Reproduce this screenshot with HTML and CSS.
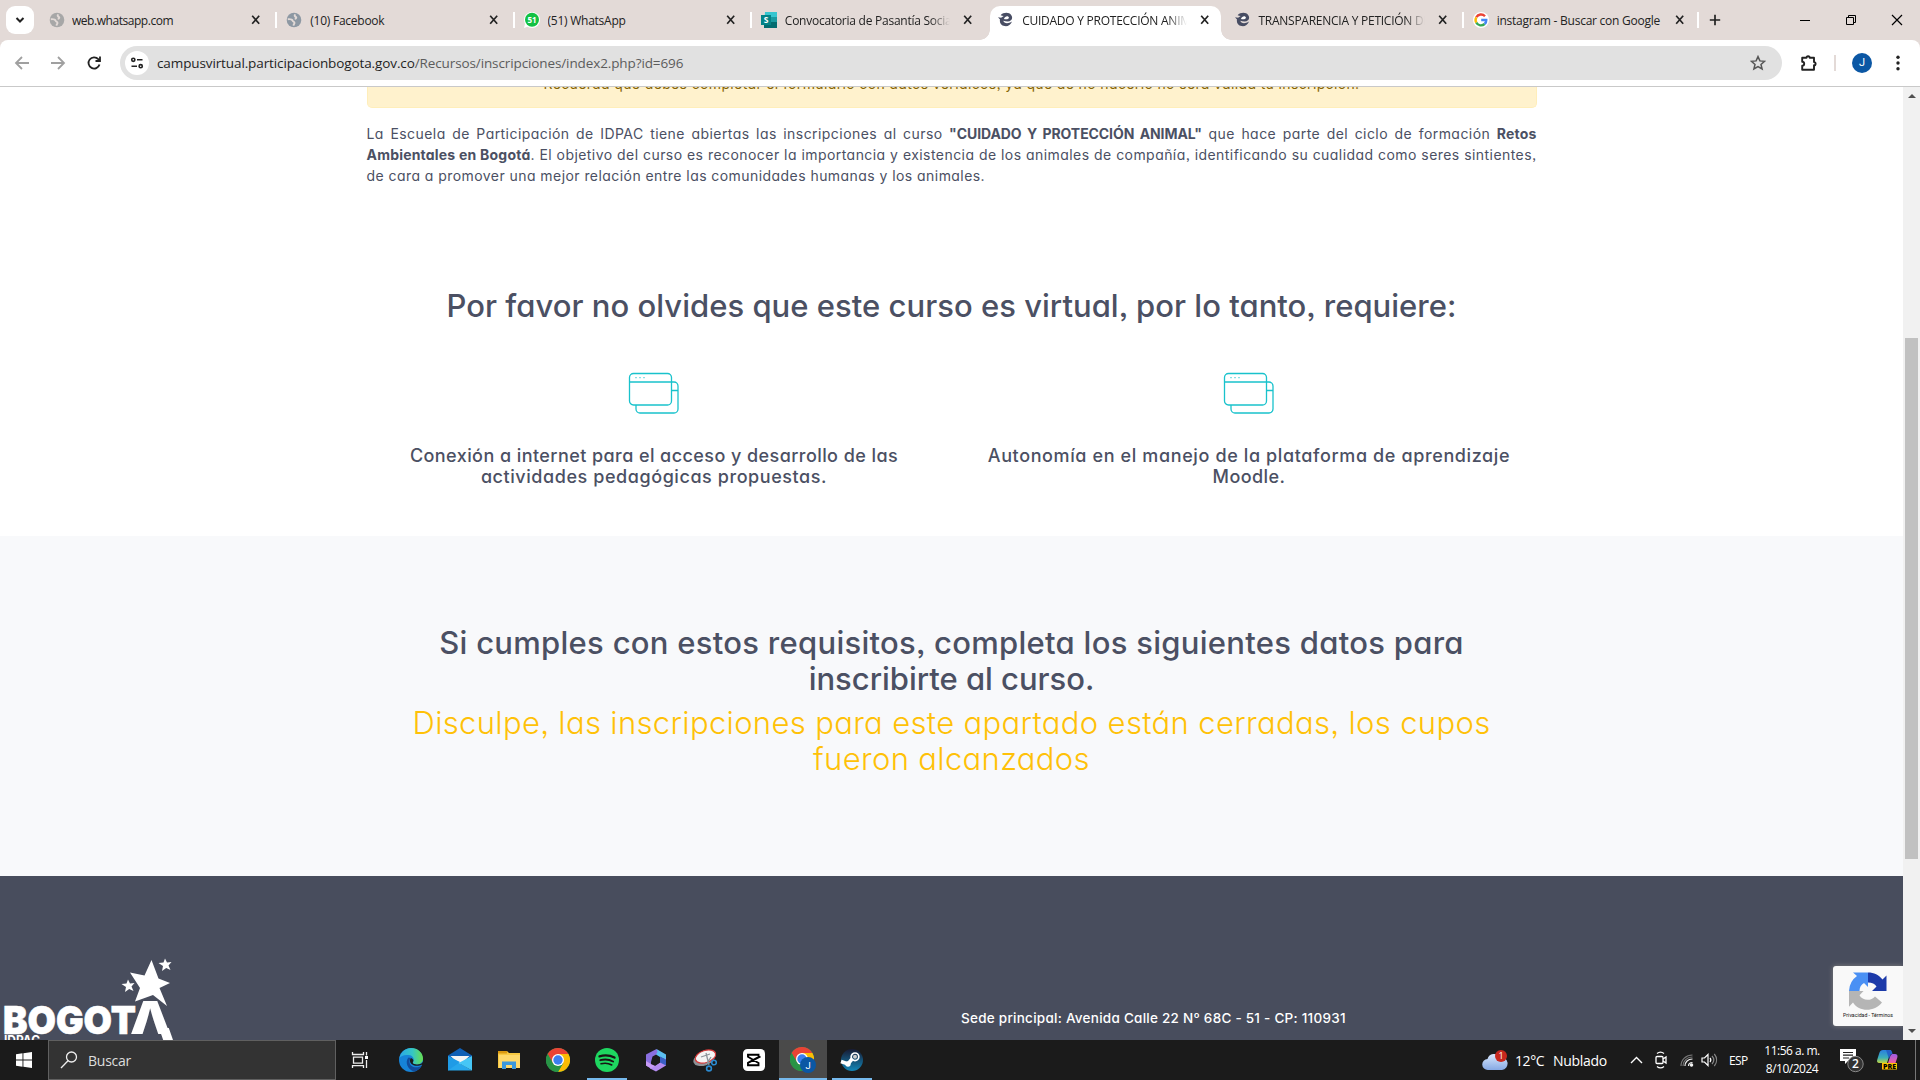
FILE: index.html
```html
<!DOCTYPE html>
<html lang="es">
<head>
<meta charset="utf-8">
<title>CUIDADO Y PROTECCIÓN ANIMAL</title>
<link rel="stylesheet" href="styles.css">
</head>
<body>
<svg class="defs" width="0" height="0">
  <defs>
    <symbol id="close" viewBox="0 0 12 12"><path d="M2.2 1.8l7 8M9.2 1.8l-7 8" stroke="#222" stroke-width="1.7" fill="none"/></symbol>
    <symbol id="globe" viewBox="0 0 16 16"><circle cx="8" cy="8" r="7.3" fill="currentColor"/><path d="M1.800 7.200c2.500-.2 4.500.3 5 1.600.5 1.200 1.800 1 1.700 2.300l-1.200 2.600M9.500 2.500c-1.500.8-.8 1.900.2 2.300 1.200.6.300 1.900-1 2" fill="none" stroke="#e3dad7" stroke-width="1.900"/></symbol>
    <symbol id="escuela" viewBox="0 0 16 16"><path d="M2.600 3.200C5.500.2 11-.2 13.300 3.200c2 3.200.2 6.200-3.600 6.300-1.600 0-3.200-.3-4.400-.8.600 2.700 4.600 3.400 8.700.8-1.300 3.400-4.400 5.200-7.500 4.600C3 13.400 1.300 10.600 2 7.600L0 5.300l3.100.4 2.600-1.600c-1-.2-2-.4-3.100-.9z" fill="#484d63"/><path d="M5.900 7c.9-2.200 2.600-3 4.200-2.500 1.500.7.900 2.600-.9 2.800-1.200.1-2.200 0-3.300-.3z" fill="#fff"/></symbol>
    <symbol id="chrome" viewBox="0 0 24 24"><circle cx="12" cy="12" r="12" fill="#34a853"/><path d="M12 12L1.600 6A12 12 0 0 1 22.400 6z" fill="#ea4335"/><path d="M12 6h10.400A12 12 0 0 1 12 24l5.200-9z" fill="#fbbc04"/><path d="M1.600 6L6.800 15 12 6z" fill="#ea4335"/><path d="M1.600 6A12 12 0 0 0 12 24l5.200-9H6.800z" fill="#289446"/><circle cx="12" cy="12" r="6" fill="#fff"/><circle cx="12" cy="12" r="4.700" fill="#3b7ff0"/></symbol>
    <symbol id="windows" viewBox="0 0 52 52"><g fill="none" stroke="#19c2cc" stroke-width="1.300"><rect x="1.500" y="5.500" width="42" height="31.500" rx="4"/><path d="M1.500 14h42M43.500 14h2.500a4 4 0 0 1 4 4v23a4 4 0 0 1-4 4H12a4 4 0 0 1-4-4v-4M43.500 22.500h6.500"/><path d="M7.500 9.700h1M11.500 9.700h1M15.500 9.700h1"/></g></symbol>
  </defs>
</svg>

<header class="tabstrip">
  <button class="tab-search"><svg width="12" height="12" viewBox="0 0 12 12"><path d="M2.500 4l3.500 3.500L9.500 4" fill="none" stroke="#222" stroke-width="2"/></svg></button>
  <div class="tabs">
    <div class="tab"><svg class="fav grey"><use href="#globe"/></svg><span class="title snug">web.whatsapp.com</span><svg class="x"><use href="#close"/></svg></div>
    <div class="tab sep"><svg class="fav steel"><use href="#globe"/></svg><span class="title">(10) Facebook</span><svg class="x"><use href="#close"/></svg></div>
    <div class="tab sep"><svg class="fav" viewBox="0 0 16 16"><circle cx="8" cy="8" r="8" fill="#fff"/><path d="M0 16l1.500-6 4 4z" fill="#fff"/><circle cx="8" cy="7.800" r="7" fill="#12c143"/><text x="8" y="10.700" text-anchor="middle" font-size="8" font-weight="700" fill="#fff" font-family="Open Sans, sans-serif">51</text></svg><span class="title">(51) WhatsApp</span><svg class="x"><use href="#close"/></svg></div>
    <div class="tab sep"><svg class="fav" viewBox="0 0 16 16"><path d="M4 0h12v16H3z" fill="#37c6d0"/><path d="M3 8h13v8H3z" fill="#036c70"/><path d="M9 5h7v5H9z" fill="#1a9ba1"/><rect y="3" width="10" height="10" fill="#038387"/><text x="5" y="11" text-anchor="middle" font-size="8.500" font-weight="700" fill="#fff" font-family="Open Sans, sans-serif">S</text></svg><span class="title fade">Convocatoria de Pasantía Social</span><svg class="x"><use href="#close"/></svg></div>
    <div class="tab active"><svg class="fav"><use href="#escuela"/></svg><span class="title fade">CUIDADO Y PROTECCIÓN ANIMAL</span><svg class="x"><use href="#close"/></svg></div>
    <div class="tab"><svg class="fav"><use href="#escuela"/></svg><span class="title fade">TRANSPARENCIA Y PETICIÓN DE</span><svg class="x"><use href="#close"/></svg></div>
    <div class="tab sep"><svg class="fav" viewBox="0 0 16 16"><circle cx="8" cy="8" r="8" fill="#fff"/><g fill="none" stroke-width="2.400"><path d="M12 4.200A5.400 5.400 0 0 0 3.300 5.300" stroke="#ea4335"/><path d="M3.300 5.300a5.400 5.400 0 0 0 0 5.400" stroke="#fbbc05"/><path d="M3.300 10.700a5.400 5.400 0 0 0 8.300 1.300" stroke="#34a853"/><path d="M11.600 12c1.200-1.100 1.800-2.500 1.700-4H8.200" stroke="#4285f4"/></g></svg><span class="title">instagram - Buscar con Google</span><svg class="x"><use href="#close"/></svg></div>
  </div>
  <button class="new-tab"><svg width="12" height="12" viewBox="0 0 12 12"><path d="M6 .8v10.400M.8 6h10.400" stroke="#222" stroke-width="1.700"/></svg></button>
  <div class="window-controls">
    <svg width="12" height="12"><path d="M1 6.500h10" stroke="#000"/></svg>
    <svg width="12" height="12" fill="none" stroke="#000"><path d="M1.500 3.500h7v7h-7zM3.500 3.500v-2h7v7h-2"/></svg>
    <svg width="12" height="12"><path d="M1 1l10 10M11 1L1 11" stroke="#000" stroke-width="1.200"/></svg>
  </div>
</header>

<div class="toolbar-wrap">
<nav class="toolbar">
  <svg class="nav-icon off" viewBox="0 0 16 16"><path d="M15 8H2.500M8 2L2 8l6 6"/></svg>
  <svg class="nav-icon off" viewBox="0 0 16 16"><path d="M1 8h12.500M8 2l6 6-6 6"/></svg>
  <svg class="nav-icon" viewBox="0 0 16 16"><path d="M13.500 9.500A5.600 5.600 0 1 1 12.300 4.200L14 6M14 1.500V6H9.500"/></svg>
  <div class="omnibox">
    <span class="site-info"><svg width="14" height="14" viewBox="0 0 14 14" fill="none" stroke="#222" stroke-width="1.600"><circle cx="3.300" cy="3.800" r="1.600"/><path d="M7 3.800h5.500M1.500 10.200H7"/><circle cx="10.700" cy="10.200" r="1.600"/></svg></span>
    <span class="url"><b>campusvirtual.participacionbogota.gov.co</b>/Recursos/inscripciones/index2.php?id=696</span>
    <svg width="16" height="16" viewBox="0 0 16 16"><path d="M8 1.600l1.900 4.300 4.700.4-3.600 3.100 1.100 4.600L8 11.600 3.900 14 5 9.400 1.400 6.300l4.700-.4z" fill="none" stroke="#555" stroke-width="1.500"/></svg>
  </div>
  <svg class="puzzle" viewBox="0 0 18 18"><path d="M2.200 3.800h4.300a1.600 1.600 0 0 1 3.200 0H14v4.300a1.600 1.600 0 0 1 0 3.200v4.500H2.200v-4a2 2 0 0 0 0-4z" fill="none" stroke="#222" stroke-width="1.900" stroke-linejoin="round"/></svg>
  <span class="divider"></span>
  <span class="avatar">J</span>
  <svg class="dots" viewBox="0 0 4 16"><circle cx="2" cy="2.300" r="1.700"/><circle cx="2" cy="8" r="1.700"/><circle cx="2" cy="13.700" r="1.700"/></svg>
</nav>
</div>

<div class="viewport">
  <main class="page">
    <section class="intro">
      <div class="alert">Recuerda que debes completar el formulario con datos verídicos, ya que de no hacerlo no será válida tu inscripción.</div>
      <p class="lead">La Escuela de Participación de IDPAC tiene abiertas las inscripciones al curso <strong class="course">"CUIDADO Y PROTECCIÓN ANIMAL"</strong> que hace parte del ciclo de formación <strong>Retos Ambientales en Bogotá</strong>. El objetivo del curso es reconocer la importancia y existencia de los animales de compañía, identificando su cualidad como seres sintientes, de cara a promover una mejor relación entre las comunidades humanas y los animales.</p>
    </section>
    <section class="needs">
      <h2 class="needs-title">Por favor no olvides que este curso es virtual, por lo tanto, requiere:</h2>
      <div class="cols">
        <div class="col"><svg class="win"><use href="#windows"/></svg><h4>Conexión a internet para el acceso y desarrollo de las<br><span class="l2">actividades pedagógicas propuestas.</span></h4></div>
        <div class="col"><svg class="win"><use href="#windows"/></svg><h4><span class="wide">Autonomía en el manejo de la plataforma de aprendizaje</span><br>Moodle.</h4></div>
      </div>
    </section>
    <section class="closed">
      <h2>Si cumples con estos requisitos, completa los siguientes datos para<br><span class="tight">inscribirte al curso.</span></h2>
      <h2 class="warn">Disculpe, las inscripciones para este apartado están cerradas, los cupos<br>fueron alcanzados</h2>
    </section>
    <footer class="foot">
      <svg class="brand" width="180" height="84" viewBox="0 0 180 84" fill="#fff" font-family="Inter, sans-serif">
        <path d="M151.500 4l7 18.500L170 27l-10.500 5 7.500 18-14-11-18 6.500 5-13.500-10-15.500 14.500 3z"/>
        <path d="M165 2.500l2 4 4.500-.5-3 3.500 2 4.500-4.300-2-4.200 3 1-5-4.500-3 5-.5zM128 23.500l2 4 4.500-.5-3 3.500 2 4.500-4.300-2-4.200 3 1-5-4.500-3 5-.5z"/>
        <text x="3" y="78" font-size="38.500" font-weight="900" textLength="133" lengthAdjust="spacingAndGlyphs" stroke="#fff" stroke-width=".6">BOGOT</text>
        <text x="130" y="78" font-size="46" font-weight="900" textLength="41" lengthAdjust="spacingAndGlyphs">Λ</text>
        <path d="M159 72h9.800l4.200 12h-9.800z"/>
        <text x="4" y="89" font-size="13" font-weight="700" textLength="36" lengthAdjust="spacingAndGlyphs">IDPAC</text>
      </svg>
      <p class="contact">Sede principal: Avenida Calle 22 Nº 68C - 51 - CP: 110931</p>
    </footer>
    <aside class="recaptcha">
      <svg width="38" height="38" viewBox="0 0 38 38"><path d="M0 19A19 19 0 0 1 8 4L4 .5h15V15l-4-4c-3 1.500-4.500 4.500-4.500 8z" fill="#4a90f4"/><path d="M19 .5c6 0 11 2.500 14.500 7l4-4V19H23l4.500-4.500C26 12 23 10.500 19 10.500z" fill="#1c3aa9"/><path d="M0 19h14.500l-4 4.300c2.500 5 11 6.500 15.500 1.200l7 6C25 40.500 10 40 4 30.500l-4 4.200z" fill="#b5b5b5"/></svg>
      <span>Privacidad - Términos</span>
    </aside>
  </main>
  <div class="scrollbar"><i class="up"></i><i class="thumb"></i><i class="down"></i></div>
</div>

<footer class="taskbar">
  <span class="start"><svg width="16" height="16" viewBox="0 0 16 16" fill="#fff"><path d="M0 2.200l6.500-.9v6.200H0zM7.400 1.200L16 0v7.500H7.400zM0 8.400h6.500v6.300L0 13.800zM7.400 8.400H16V16l-8.600-1.200z"/></svg></span>
  <div class="search"><svg width="18" height="18" viewBox="0 0 18 18" fill="none" stroke="#eee" stroke-width="1.300"><circle cx="11.500" cy="6" r="5"/><path d="M8 9.700L1 17"/></svg><span>Buscar</span></div>
  <div class="apps">
    <span class="app view"><svg width="18" height="18" viewBox="0 0 18 18" fill="none" stroke="#eee" stroke-width="1.300"><path d="M2.500 6.200h9v6h-9zM1.500 1v2.500h11V1M1.500 17v-2.300h11V17M15.500 1v3.500M15.500 9v8"/><path d="M14 5h3v3h-3z" fill="#fff" stroke="none"/></svg></span>
    <span class="app"><svg width="24" height="24" viewBox="0 0 24 24"><defs><linearGradient id="eg" x1="0" x2="1"><stop offset="0" stop-color="#2aa7e8"/><stop offset=".55" stop-color="#35c6c5"/><stop offset="1" stop-color="#68e04e"/></linearGradient></defs><circle cx="12" cy="12" r="12" fill="#1683d8"/><path d="M.3 10C2 3.500 7 0 12 0c7 0 12 5 12 10.500 0 4-3.500 6-6.500 6-3 0-4.500-1.200-3.500-2.500 1.500-2 1-6.500-4.500-7C5 6.500 1.500 8 .3 10z" fill="url(#eg)"/><path d="M9.500 9.500c-4 4-1 12.500 6 14 3.500-1 6-3.500 7-5.500-6 3-11.500.5-12-3.500-.2-2 .3-3.500 1.500-4.500z" fill="#114c9c"/><path d="M12 10c-1.500 1.500-1.500 4 .5 6 3 2.500 7.500 2 10 .8.800-.3 1.200.2.500 1.200l1 .5V14c-2 2.500-5 2.800-7.500 2.300-2-.3-3.400-1-2.500-2.300.8-1 .8-3-2-4z" fill="#1b1b1b"/></svg></span>
    <span class="app"><svg width="24" height="24" viewBox="0 0 24 24"><path d="M0 7.500L12 0l12 7.500V12H0z" fill="#0f5fb5"/><path d="M2.500 8h19L12 17z" fill="#f4f4f4"/><path d="M0 8l12 7.500L24 22.500H0z" fill="#27a7ec"/><path d="M24 8L10.500 15 24 22.500z" fill="#46c6f6"/><path d="M0 8l12 6-12 8.500z" fill="#1f9be6"/></svg></span>
    <span class="app"><svg width="24" height="24" viewBox="0 0 24 24"><path d="M1 3h9l2 2h11v15H1z" fill="#f8c942"/><path d="M1 3h9v2.500H1z" fill="#dc9a10"/><path d="M2 7h21v13H2z" fill="#ffd96b"/><path d="M5 21v-7.500h14V21h-4v-4H9v4z" fill="#3b98dd"/></svg></span>
    <span class="app"><svg width="24" height="24"><use href="#chrome"/></svg></span>
    <span class="app open"><svg width="24" height="24" viewBox="0 0 24 24"><circle cx="12" cy="12" r="12" fill="#1ed760"/><g fill="none" stroke="#191414" stroke-linecap="round"><path d="M4.500 8.300c5-1.500 10.500-1.100 15 1.300" stroke-width="2.300"/><path d="M5.300 12.200c4.300-1.300 9-.8 12.800 1.300" stroke-width="1.900"/><path d="M6 15.800c3.700-1 7.500-.7 10.800 1.200" stroke-width="1.500"/></g></svg></span>
    <span class="app"><svg width="24" height="24" viewBox="0 0 24 24"><path d="M12.500 1L2 6.500v11l5 3V14l1.500-5.500L15 5z" fill="#8a6fe0"/><path d="M12.500 1L22 6.500V12l-6-3-4-2.500 1.500-2.500z" fill="#5cc0f2"/><path d="M22 10v7.500L12 23.500 6 20.500v-4l5 1.500 5-3.500z" fill="#b58cf0"/><path d="M2 13l5 3 4 2-4 2.500-5-3z" fill="#c79bf5"/><path d="M16 8.500l6 3v6l-6-3z" fill="#3a5fc4"/><path d="M11 9l5 2.200v3.300L11.500 17 8.500 15v-4z" fill="#1b1b1b"/></svg></span>
    <span class="app"><svg width="24" height="24" viewBox="0 0 24 24"><ellipse cx="11" cy="11" rx="11" ry="6.500" fill="#8d9297" transform="rotate(-18 11 11)"/><ellipse cx="12.500" cy="8.500" rx="10.500" ry="6" fill="#f4f4f4" stroke="#d63b3b" stroke-width="1.200" transform="rotate(-18 12.500 8.500)"/><path d="M8 9l9-3M13 5l3 12M18 9l-5 8" stroke="#8c949b" stroke-width="1.300"/><g fill="none" stroke="#2b8ad0" stroke-width="1.600"><circle cx="21" cy="14.500" r="2.300"/><circle cx="16" cy="20.500" r="2.400"/></g></svg></span>
    <span class="app"><svg width="22" height="22" viewBox="0 0 22 22"><rect width="22" height="22" rx="4.500" fill="#fff"/><path d="M17.500 7.500L5 14v2.300h10.500V14L4.500 7.500M5 8V5.700h10.500V8L4.500 14" fill="none" stroke="#000" stroke-width="1.900"/></svg></span>
    <span class="app current"><svg width="26" height="26" viewBox="0 0 26 26"><svg width="24" height="24"><use href="#chrome"/></svg><circle cx="18" cy="18" r="8" fill="#0b57a4"/><text x="18" y="21.500" text-anchor="middle" font-size="9.500" fill="#fff" font-family="Roboto, sans-serif">J</text></svg></span>
    <span class="app open"><svg width="24" height="24" viewBox="0 0 24 24"><defs><linearGradient id="sg" x1="0" x2="0" y1="0" y2="1"><stop offset="0" stop-color="#171a33"/><stop offset="1" stop-color="#1387b8"/></linearGradient></defs><circle cx="12" cy="12" r="11" fill="url(#sg)"/><path d="M1 13.500l7 2.500 4.500-5.500" fill="none" stroke="#fff" stroke-width="3.600"/><circle cx="15" cy="8.800" r="3.800" fill="none" stroke="#fff" stroke-width="1.700"/><circle cx="15" cy="8.800" r="2" fill="#ccc"/><circle cx="8" cy="16" r="2.700" fill="#fff"/></svg></span>
  </div>
  <div class="tray">
    <svg class="cloud" width="26" height="22" viewBox="0 0 26 22"><defs><linearGradient id="cg" x1="0" x2="0" y1="0" y2="1"><stop offset="0" stop-color="#d9e8fd"/><stop offset="1" stop-color="#86a9e4"/></linearGradient></defs><path d="M6 21a5.500 5.500 0 0 1-.5-11A7 7 0 0 1 18 8a6 6 0 0 1 2 13z" fill="url(#cg)"/><circle cx="19" cy="7" r="6" fill="#c8281e"/><text x="19" y="10.300" text-anchor="middle" font-size="9" fill="#fff" font-family="Open Sans, sans-serif">1</text></svg>
    <span class="temp">12°C</span><span class="sky">Nublado</span>
    <svg class="caret" width="13" height="8" viewBox="0 0 13 8"><path d="M1 7l5.500-5.500L12 7" fill="none" stroke="#fff" stroke-width="1.400"/></svg>
    <svg class="meet" width="14" height="18" viewBox="0 0 14 18" fill="none" stroke="#fff" stroke-width="1.300"><rect x="2" y="5.500" width="7" height="7" rx="1"/><path d="M9 8l3-2v6L9 10M3 2.500c2-1.600 5-1.600 7 0M3 15.500c2 1.600 5 1.600 7 0"/></svg>
    <svg class="wifi" width="14" height="14" viewBox="0 0 14 14" fill="none" stroke="#eee" stroke-width="1.200"><path d="M8.500 13c0-2 1.500-3.500 4-3.500M5 13c0-4 3-7 7.500-7"/><path d="M1 13C1 6.500 6 2 12.500 2M3 13c0-5 4-9 9.500-9" stroke="#777"/><circle cx="11.500" cy="12" r="1.200" fill="#fff"/></svg>
    <svg class="sound" width="17" height="14" viewBox="0 0 17 14" fill="none" stroke="#fff" stroke-width="1.200"><path d="M1 5h2.500L7 1.500v11L3.500 9H1zM9 5c1 1.200 1 2.800 0 4"/><path d="M11 3c2.200 2.400 2.200 5.600 0 8M13.300 1c3 3.600 3 8.400 0 12" stroke="#888"/></svg>
    <span class="lang">ESP</span>
    <span class="clock"><span>11:56 a. m.</span><span>8/10/2024</span></span>
    <svg class="notif" width="26" height="26" viewBox="0 0 26 26"><path d="M1 2h16v12H9l-3 3v-3H1z" fill="#fff"/><path d="M4 5.500h10M4 8.200h10M4 11h6" stroke="#222" stroke-width="1.200"/><circle cx="16.500" cy="17" r="7.700" fill="#333" stroke="#888"/><text x="16.500" y="21.300" text-anchor="middle" font-size="12" font-weight="600" fill="#fff" font-family="Open Sans, sans-serif">2</text></svg>
    <svg class="copilot" width="22" height="20" viewBox="0 0 22 20"><defs><linearGradient id="ca" x1="0" x2="0" y1="0" y2="1"><stop offset="0" stop-color="#2a7fe0"/><stop offset=".6" stop-color="#3cb0b8"/><stop offset="1" stop-color="#c3d53c"/></linearGradient><linearGradient id="cb" x1="0" x2="0" y1="0" y2="1"><stop offset="0" stop-color="#9c5be8"/><stop offset="1" stop-color="#f0609c"/></linearGradient></defs><path d="M6 0h8l-4 13H2c-2 0-2.300-1.500-1.700-3.500l2-6.500C3 1 4 0 6 0z" fill="url(#ca)"/><path d="M15 4h3c2 0 3 1.500 2.300 3.500L18.500 13H11l2.500-7.500z" fill="url(#cb)"/><path d="M9 0h4c1.500 0 2 1.500 2.500 4-1.500 0-2 .5-2.500 2L12 9z" fill="#2363c8"/><rect x="5" y="13" width="15" height="6.500" fill="#ffc400"/><text x="12.500" y="18.700" text-anchor="middle" font-size="7" font-weight="800" fill="#000" font-family="Open Sans, sans-serif">PRE</text></svg>
    <i class="peek"></i>
  </div>
</footer>
</body>
</html>
```
FILE: styles.css
```css
* { box-sizing: border-box; }
body {
  margin: 0;
  width: 1920px;
  height: 1080px;
  overflow: hidden;
  display: flex;
  flex-direction: column;
  font-family: "Open Sans", "Noto Sans", sans-serif;
  background: #fff;
}
.defs { position: absolute; }
button { border: 0; padding: 0; background: none; }
svg { flex: none; display: block; }

/* Tab strip */
.tabstrip {
  flex: none;
  height: 40px;
  display: flex;
  align-items: stretch;
  background: #e3dad7;
}
.tab-search {
  flex: none;
  width: 28px;
  height: 28px;
  margin: 6px 0 0 6px;
  border-radius: 9px;
  background: #fff;
  display: flex;
  align-items: center;
  justify-content: center;
}
.tabs {
  flex: none;
  width: 1661px;
  margin-left: 4px;
  display: grid;
  grid-template-columns: repeat(7, minmax(0, 1fr));
}
.tab {
  display: flex;
  align-items: center;
  padding: 0 13px 0 11px;
  position: relative;
}
.tab.sep { background: linear-gradient(#fff, #fff) 0 12px / 2px 16px no-repeat; }
.tab:last-child { background: linear-gradient(#fff, #fff) 0 12px / 2px 16px no-repeat, linear-gradient(#fff, #fff) 100% 12px / 2px 16px no-repeat; }
.tab.active {
  background: #fff;
  margin: 6px 3px 0;
  padding: 0 10px 6px 8px;
  border-radius: 10px 10px 0 0;
}
.tab.active::before, .tab.active::after {
  content: "";
  position: absolute;
  bottom: 0;
  width: 10px;
  height: 10px;
}
.tab.active::before { left: -10px; background: radial-gradient(circle at 0 0, transparent 9.5px, #fff 10px); }
.tab.active::after { right: -10px; background: radial-gradient(circle at 100% 0, transparent 9.5px, #fff 10px); }
.fav { width: 16px; height: 16px; }
.grey { color: #a7a7a7; }
.steel { color: #8d98a3; }
.title {
  flex: 1;
  min-width: 0;
  margin: 1px 13px 0 7px;
  font-size: 12px;
  letter-spacing: -0.25px;
  color: #222;
  white-space: nowrap;
  overflow: hidden;
}
.sep .title, .active .title { margin-left: 8px; }
.snug { letter-spacing: -0.46px; }
.fade { margin-right: 12px; mask-image: linear-gradient(90deg, #000 88%, transparent 100%); }
.x { width: 12px; height: 12px; }
.new-tab { width: 32px; display: flex; align-items: center; justify-content: center; }
.window-controls {
  margin-left: auto;
  padding-right: 17px;
  display: flex;
  align-items: center;
  gap: 34px;
}

/* Address bar */
.toolbar-wrap { flex: none; background: #e3dad7; border-bottom: 1px solid #c9c9c9; }
.toolbar {
  height: 46px;
  padding: 0 20px 0 14px;
  display: flex;
  align-items: center;
  background: #fff;
  border-radius: 8px 8px 0 0;
}
.nav-icon { width: 16px; height: 16px; margin-right: 20px; fill: none; stroke: #222; stroke-width: 1.8; }
.nav-icon.off { stroke: #a0a0a0; }
.nav-icon:nth-child(3) { margin-right: 18px; }
.omnibox {
  width: 1662px;
  height: 34px;
  border-radius: 17px;
  background: #e1e1e1;
  padding: 0 16px 0 5px;
  display: flex;
  align-items: center;
}
.site-info {
  width: 24px;
  height: 24px;
  border-radius: 50%;
  background: #fff;
  display: flex;
  align-items: center;
  justify-content: center;
}
.url { flex: 1; margin-left: 8px; font-size: 13.5px; letter-spacing: -0.11px; color: #5c5c5c; }
.url b { font-weight: 400; color: #1f1f1f; }
.puzzle { width: 18px; height: 18px; margin-left: 18px; }
.divider { width: 2px; height: 16px; margin-left: 16px; background: #e3dad7; }
.avatar {
  width: 20px;
  height: 20px;
  margin-left: 16px;
  border-radius: 50%;
  background: #0b57a4;
  color: #fff;
  font: 11px/20px Roboto, sans-serif;
  text-align: center;
}
.dots { width: 4px; height: 16px; margin-left: 24px; fill: #222; }

/* Page */
.viewport { flex: none; height: 953px; display: flex; overflow: hidden; }
.page {
  position: relative;
  width: 1903px;
  overflow: hidden;
  color: #4b5063;
  font-family: Inter, sans-serif;
  font-feature-settings: "cv11", "ss03";
}
.intro { width: 1170px; margin: 0 auto; }
.alert {
  height: 21px;
  border: 1px solid #ffeeba;
  border-top: 0;
  border-radius: 0 0 5px 5px;
  background: #fff2cd;
  color: #856404;
  text-align: center;
  font-size: 14px;
  line-height: 21px;
  letter-spacing: 0.365px;
  overflow: hidden;
}
.alert::before { content: ""; display: block; margin-top: -14px; }
.lead {
  margin: 15px 0 0;
  font-size: 14px;
  line-height: 21px;
  letter-spacing: 0.44px;
  text-align: justify;
}
.lead strong { letter-spacing: 0.2px; }
.lead .course { letter-spacing: -0.08px; }
.needs { height: 350px; padding-top: 102px; text-align: center; }
h2 {
  margin: 0;
  font-size: 31px;
  line-height: 36px;
  font-weight: 500;
  letter-spacing: 0.285px;
  text-align: center;
}
.needs-title { letter-spacing: 0.025px; }
.tight { letter-spacing: -0.02px; }
.cols { width: 1190px; margin: 44px auto 0; display: grid; grid-template-columns: 1fr 1fr; }
.col { display: flex; flex-direction: column; align-items: center; }
.win { width: 52px; height: 52px; }
h4 {
  margin: 25px 0 0;
  font-size: 18px;
  line-height: 21px;
  font-weight: 500;
  letter-spacing: 0.43px;
  white-space: nowrap;
}
.l2 { letter-spacing: 0.57px; }
.wide { letter-spacing: 0.62px; }
.closed { height: 340px; padding-top: 89px; background: #f8f9fb; }
.warn { margin-top: 8px; font-weight: 300; color: #ffc107; letter-spacing: 0.34px; }
.foot { height: 164px; padding-top: 80px; display: flex; background: #484d5d; color: #fff; }
.contact {
  margin: 53px 0 0 781px;
  font-size: 13.5px;
  line-height: 18px;
  font-weight: 500;
  letter-spacing: 0.26px;
}
.recaptcha {
  position: absolute;
  right: 0;
  top: 879px;
  width: 70px;
  height: 60px;
  padding-top: 6px;
  border-radius: 3px 0 0 3px;
  background: #f9f9f9;
  box-shadow: 0 0 5px #808080;
  display: flex;
  flex-direction: column;
  align-items: center;
  gap: 1px;
}
.recaptcha span { font: 5.2px/8px Roboto, sans-serif; color: #111; letter-spacing: 0; }

.scrollbar {
  width: 17px;
  background: #f1f1f1;
  display: flex;
  flex-direction: column;
  align-items: center;
}
.scrollbar i { flex: none; }
.up { margin-top: 7px; border: 4px solid transparent; border-top: 0; border-bottom-color: #505050; }
.thumb { width: 13px; height: 521px; margin-top: 240px; background: #c1c1c1; }
.down { margin: auto 0 7px; border: 4px solid transparent; border-bottom: 0; border-top-color: #505050; }

/* Taskbar */
.taskbar { flex: none; height: 40px; display: flex; background: #1b1b1b; color: #fff; }
.start { width: 48px; display: flex; align-items: center; justify-content: center; }
.search {
  width: 288px;
  border: 1px solid #606060;
  background: #333;
  padding-left: 11px;
  display: flex;
  align-items: center;
  gap: 10px;
  font-size: 14px;
  letter-spacing: -0.25px;
  color: #ddd;
}
.apps { display: flex; }
.app { width: 48px; margin-right: 1px; display: flex; align-items: center; justify-content: center; }
.app.view { margin-right: 3px; }
.app.open { background: linear-gradient(#76b9ed, #76b9ed) 50% 100% / 40px 2px no-repeat; }
.app.current { background: #4a4a4a; border-bottom: 2px solid #76b9ed; padding-top: 2px; }
.tray { margin-left: auto; display: flex; align-items: center; }
.temp { margin-left: 7px; width: 38px; font-size: 14px; letter-spacing: -0.4px; }
.sky { width: 77px; font-size: 14px; letter-spacing: -0.3px; }
.meet { margin-left: 11px; }
.wifi { margin-left: 12px; }
.sound { margin-left: 7px; }
.lang { margin-left: 11px; width: 20px; font-size: 12px; letter-spacing: -0.6px; }
.clock {
  margin-left: 14px;
  width: 58px;
  display: flex;
  flex-direction: column;
  text-align: center;
  font-size: 12px;
  line-height: 18px;
  letter-spacing: -0.5px;
  white-space: nowrap;
}
.notif { margin-left: 18px; }
.copilot { margin-left: 12px; }
.peek { width: 1px; height: 40px; margin: 0 4px 0 16px; background: #777; }
```
